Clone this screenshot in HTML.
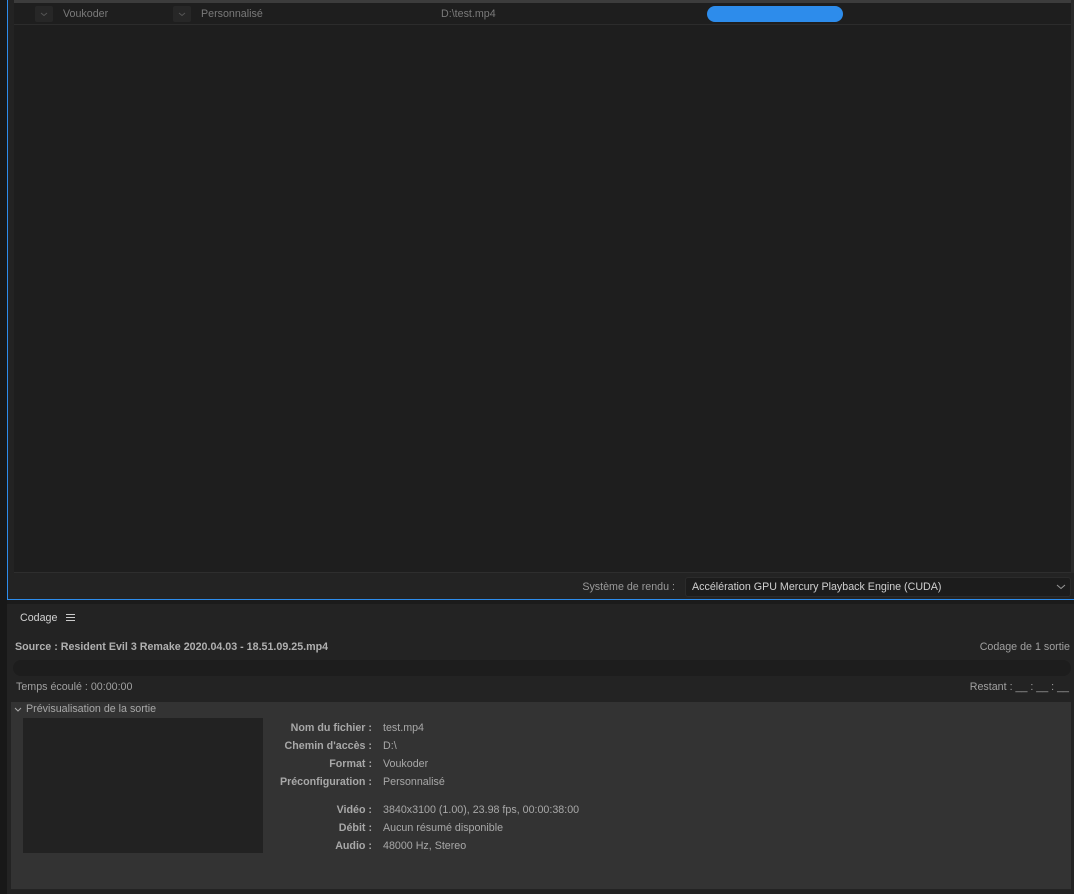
<!DOCTYPE html>
<html><head><meta charset="utf-8"><style>
*{margin:0;padding:0;box-sizing:border-box}
body{width:1074px;height:894px;background:#1b1b1b;font-family:"Liberation Sans",sans-serif;font-size:10.7px;color:#a8a8a8;position:relative;overflow:hidden}
.a{position:absolute}
</style></head><body>
<div class="a" style="left:0;top:0;width:7px;height:894px;background:#181818"></div>
<div class="a" style="left:7px;top:0;width:1067px;height:600px;background:#232323;border-left:1px solid #2d8ceb;border-bottom:1px solid #2d8ceb"></div>
<div class="a" style="left:14px;top:0;width:1057px;height:3px;background:#3c3c3c"></div>
<div class="a" style="left:14px;top:3px;width:1057px;height:570px;background:#1e1e1e;border-bottom:1px solid #2e2e2e"></div>
<div class="a" style="left:14px;top:24px;width:1057px;height:1px;background:#2c2c2c"></div>
<div class="a" style="left:1071px;top:0;width:3px;height:573px;background:#2a2a2a"></div>
<div class="a" style="left:35px;top:6px;width:18px;height:16px;background:#272727;border-radius:2px"><svg width="18" height="16"><path d="M6 7l3 2.5 3-2.5" stroke="#555" fill="none"/></svg></div>
<div class="a" style="left:63px;top:8px;color:#7a7a7a">Voukoder</div>
<div class="a" style="left:173px;top:6px;width:18px;height:16px;background:#272727;border-radius:2px"><svg width="18" height="16"><path d="M6 7l3 2.5 3-2.5" stroke="#555" fill="none"/></svg></div>
<div class="a" style="left:201px;top:8px;color:#7a7a7a">Personnalisé</div>
<div class="a" style="left:441px;top:8px;color:#7a7a7a">D:\test.mp4</div>
<div class="a" style="left:707px;top:6px;width:136px;height:16px;background:#2d8ceb;border-radius:8px"></div>
<div class="a" style="left:500px;top:581px;width:175px;text-align:right;color:#9a9a9a">Système de rendu :</div>
<div class="a" style="left:685px;top:577px;width:386px;height:20px;background:#1c1c1c;border:1px solid #2b2b2b;border-radius:3px;color:#d0d0d0;padding:3px 6px">Accélération GPU Mercury Playback Engine (CUDA)<svg class="a" style="right:4px;top:6px" width="10" height="6"><path d="M1 1l4 3.5 4-3.5" stroke="#999" fill="none"/></svg></div>
<div class="a" style="left:7px;top:604px;width:1067px;height:290px;background:#232323"></div>
<div class="a" style="left:20px;top:612px;color:#d2d2d2">Codage</div>
<svg class="a" style="left:66px;top:614px" width="9" height="8"><path d="M0 .5h9M0 3.5h9M0 6.5h9" stroke="#ccc"/></svg>
<div class="a" style="left:15px;top:641px;color:#b0b0b0;font-weight:bold">Source : Resident Evil 3 Remake 2020.04.03 - 18.51.09.25.mp4</div>
<div class="a" style="right:4px;top:641px;color:#a0a0a0">Codage de 1 sortie</div>
<div class="a" style="left:13px;top:660px;width:1058px;height:16px;background:#1d1d1d;border-radius:8px"></div>
<div class="a" style="left:16px;top:681px;color:#a0a0a0">Temps écoulé : 00:00:00</div>
<div class="a" style="right:5px;top:681px;color:#a0a0a0">Restant : __ : __ : __</div>
<div class="a" style="left:11px;top:702px;width:1060px;height:187px;background:#333"></div>
<svg class="a" style="left:14px;top:707px" width="8" height="6"><path d="M1 1l3 3 3-3" stroke="#aaa" fill="none"/></svg>
<div class="a" style="left:26px;top:703px;color:#a8a8a8">Prévisualisation de la sortie</div>
<div class="a" style="left:23px;top:718px;width:240px;height:135px;background:#222"></div>
<div class="a" style="left:240px;top:719px;width:132px;text-align:right;line-height:18px;color:#a8a8a8;font-weight:bold">Nom du fichier :<br>Chemin d'accès :<br>Format :<br>Préconfiguration :<br><div style="height:10px"></div>Vidéo :<br>Débit :<br>Audio :</div>
<div class="a" style="left:383px;top:719px;line-height:18px;color:#a8a8a8">test.mp4<br>D:\<br>Voukoder<br>Personnalisé<br><div style="height:10px"></div>3840x3100 (1.00), 23.98 fps, 00:00:38:00<br>Aucun résumé disponible<br>48000 Hz, Stereo</div>
</body></html>
